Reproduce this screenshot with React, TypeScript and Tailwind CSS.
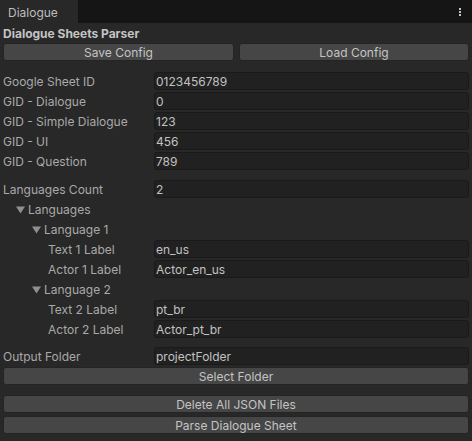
const font = { fontFamily: "Inter, 'Noto Sans', sans-serif" };

function Field({ label, value, indent = 0 }: { label: string; value: string; indent?: number }) {
  return (
    <div className="flex h-[20px] items-center">
      <div className="w-[151px] shrink-0 truncate pt-[2px] text-[12px] text-[#a9a9a9]" style={{ paddingLeft: indent }}>
        {label}
      </div>
      <div className="flex h-[18px] flex-1 items-center rounded-[3px] border border-[#1a1a1a] bg-[#212121] px-[1px] pt-[2px] text-[12px] text-[#c2c2c2]">
        {value}
      </div>
    </div>
  );
}

function Foldout({ label, indent }: { label: string; indent: number }) {
  return (
    <div className="flex h-[20px] items-center pt-[2px] text-[12px] text-[#a9a9a9]" style={{ paddingLeft: indent }}>
      <svg width="9" height="8" viewBox="0 0 9 8" className="mr-[3px]">
        <polygon points="0,0.5 9,0.5 4.5,7.5" fill="#8f8f8f" />
      </svg>
      {label}
    </div>
  );
}

function Button({ children, className = "" }: { children: string; className?: string }) {
  return (
    <button className={`flex h-[18px] items-center justify-center rounded-[3px] border border-[#242424] bg-[#464646] pt-[2px] text-[12px] leading-[12px] text-[#c4c4c4] ${className}`}>
      {children}
    </button>
  );
}

export default function App() {
  return (
    <div className="flex h-[441px] w-[472px] flex-col bg-[#282828]" style={font}>
      <div className="flex h-[23px] shrink-0 items-end bg-[#151515]">
        <div className="flex h-[23px] w-[78px] items-center bg-[#282828] pl-[8px] pt-[2px] text-[12px] text-[#bdbdbd]">
          Dialogue
        </div>
        <div className="flex-1" />
        <div className="mb-[6px] mr-[11px] flex flex-col gap-[1px] self-end pb-[1px]">
          <span className="h-[2px] w-[2px] bg-[#c4c4c4]" />
          <span className="h-[2px] w-[2px] bg-[#c4c4c4]" />
          <span className="h-[2px] w-[2px] bg-[#c4c4c4]" />
        </div>
      </div>

      <div className="flex flex-col px-[3px]">
        <div className="flex h-[19px] items-center pt-[2px] text-[12px] font-bold text-[#c4c4c4]">Dialogue Sheets Parser</div>
        <div className="mt-[1px] flex gap-[5px]">
          <Button className="w-[231px]">Save Config</Button>
          <Button className="flex-1">Load Config</Button>
        </div>

        <div className="mt-[10px]">
          <Field label="Google Sheet ID" value="0123456789" />
          <Field label="GID - Dialogue" value="0" />
          <Field label="GID - Simple Dialogue" value="123" />
          <Field label="GID - UI" value="456" />
          <Field label="GID - Question" value="789" />
        </div>

        <div className="mt-[8px]">
          <Field label="Languages Count" value="2" />
          <Foldout label="Languages" indent={13} />
          <Foldout label="Language 1" indent={29} />
          <Field label="Text 1 Label" value="en_us" indent={45} />
          <Field label="Actor 1 Label" value="Actor_en_us" indent={45} />
          <Foldout label="Language 2" indent={29} />
          <Field label="Text 2 Label" value="pt_br" indent={45} />
          <Field label="Actor 2 Label" value="Actor_pt_br" indent={45} />
        </div>

        <div className="mt-[7px]">
          <Field label="Output Folder" value="projectFolder" />
        </div>
        <Button className="mt-[1px] w-full">Select Folder</Button>

        <Button className="mt-[10px] w-full">Delete All JSON Files</Button>
        <Button className="mt-[3px] w-full">Parse Dialogue Sheet</Button>
      </div>
    </div>
  );
}
